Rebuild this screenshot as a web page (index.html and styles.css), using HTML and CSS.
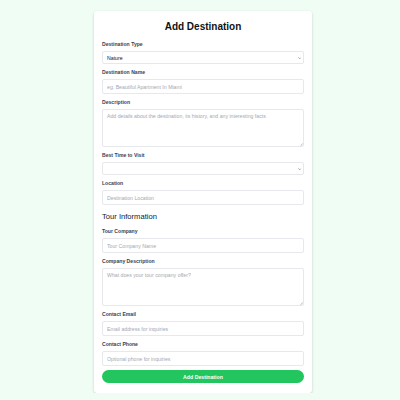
FILE: index.html
```html
<!DOCTYPE html>
<html lang="en">
<head>
<meta charset="utf-8">
<title>Add Destination</title>
<link rel="stylesheet" href="styles.css">
</head>
<body>
<main class="page">
  <form class="card">
    <h1 class="title">Add Destination</h1>

    <div class="field">
      <label class="label">Destination Type</label>
      <div class="wrap">
        <select class="control select">
          <option>Nature</option>
        </select>
        <svg class="chev" viewBox="0 0 10 6" width="3.5" height="2.2"><path d="M1 1l4 4 4-4" fill="none" stroke="#6b7280" stroke-width="1.8"/></svg>
      </div>
    </div>

    <div class="field">
      <label class="label">Destination Name</label>
      <input class="control input" placeholder="eg. Beautiful Apartment In Miami">
    </div>

    <div class="field">
      <label class="label">Description</label>
      <div class="wrap">
        <textarea class="control textarea" placeholder="Add details about the destination, its history, and any interesting facts"></textarea>
        <svg class="grip" viewBox="0 0 4 4" width="3" height="3"><path d="M0.5 3.5l3-3M2 3.5l1.5-1.5" fill="none" stroke="#9ca3af" stroke-width="0.7"/></svg>
      </div>
    </div>

    <div class="field">
      <label class="label">Best Time to Visit</label>
      <div class="wrap">
        <select class="control select">
          <option></option>
        </select>
        <svg class="chev" viewBox="0 0 10 6" width="3.5" height="2.2"><path d="M1 1l4 4 4-4" fill="none" stroke="#6b7280" stroke-width="1.8"/></svg>
      </div>
    </div>

    <div class="field">
      <label class="label">Location</label>
      <input class="control input" placeholder="Destination Location">
    </div>

    <h2 class="section">Tour Information</h2>

    <div class="field">
      <label class="label">Tour Company</label>
      <input class="control input" placeholder="Tour Company Name">
    </div>

    <div class="field">
      <label class="label">Company Description</label>
      <div class="wrap">
        <textarea class="control textarea" placeholder="What does your tour company offer?"></textarea>
        <svg class="grip" viewBox="0 0 4 4" width="3" height="3"><path d="M0.5 3.5l3-3M2 3.5l1.5-1.5" fill="none" stroke="#9ca3af" stroke-width="0.7"/></svg>
      </div>
    </div>

    <div class="field">
      <label class="label">Contact Email</label>
      <input class="control input" placeholder="Email address for inquiries">
    </div>

    <div class="field field-last">
      <label class="label">Contact Phone</label>
      <input class="control input" placeholder="Optional phone for inquiries">
    </div>

    <button type="button" class="btn">Add Destination</button>
  </form>
</main>
</body>
</html>
```

FILE: styles.css
```css
* { box-sizing: border-box; }

html, body {
  margin: 0;
  padding: 0;
  background: #f0fdf4;
  font-family: "Liberation Sans", Arial, sans-serif;
}

.page {
  display: flex;
  justify-content: center;
  padding: 11px 0 0 6px;
}

.card {
  width: 218px;
  background: #ffffff;
  border-radius: 3px;
  box-shadow: 0 1px 3px rgba(0, 0, 0, 0.12), 0 1px 2px rgba(0, 0, 0, 0.08);
  padding: 9px 8px 10px;
  display: flex;
  flex-direction: column;
}

.title {
  margin: 0 0 7px;
  font-size: 10px;
  line-height: 14px;
  font-weight: 700;
  text-align: center;
  color: #111111;
}

.field {
  display: flex;
  flex-direction: column;
  margin-bottom: 5px;
}

.field-last {
  margin-bottom: 4px;
}

.label {
  font-size: 5.1px;
  line-height: 6px;
  font-weight: 700;
  color: #374151;
  margin-bottom: 4px;
}

.wrap {
  position: relative;
}

.control {
  width: 100%;
  margin: 0;
  border: 0.5px solid #e6e8eb;
  border-radius: 2px;
  background: #ffffff;
  font-family: "Liberation Sans", Arial, sans-serif;
  font-size: 5.2px;
  color: #111827;
  outline: none;
}

.control::placeholder {
  color: #a3a9b3;
}

.input {
  height: 15px;
  padding: 0 4px;
}

.textarea {
  height: 38px;
  padding: 3px 4px;
  resize: none;
  display: block;
}

.select {
  appearance: none;
  -webkit-appearance: none;
  height: 13px;
  padding: 0 4px;
  display: block;
}

.chev {
  position: absolute;
  right: 3px;
  top: 5.5px;
}

.grip {
  position: absolute;
  right: 1px;
  bottom: 1px;
}

.section {
  margin: 2px 0 6px;
  font-size: 7.6px;
  line-height: 10px;
  font-weight: 400;
  color: #111827;
}

.btn {
  height: 13px;
  border: none;
  border-radius: 7px;
  background: #22c55e;
  color: #ffffff;
  font-family: "Liberation Sans", Arial, sans-serif;
  font-size: 5.2px;
  font-weight: 700;
  padding: 0;
}
```
